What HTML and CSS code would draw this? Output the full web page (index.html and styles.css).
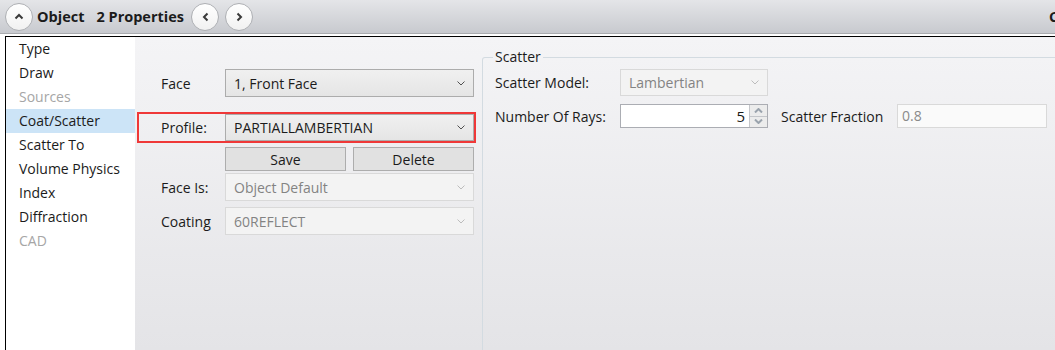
FILE: index.html
```html
<!DOCTYPE html>
<html>

<head>
    <title>Object Properties</title>
    <meta name="viewport" content="width=device-width, initial-scale=1.0">
    <link rel="stylesheet" href="styles.css">
</head>

<body>
    <div class="titlebar">
        <button class="round">
            <svg width="10" height="7" viewBox="0 0 10 7"><polyline points="1.5,5.5 5,2 8.5,5.5" /></svg>
        </button>
        <span class="title">Object</span>
        <span class="title count">2 Properties</span>
        <button class="round nav-left">
            <svg width="7" height="10" viewBox="0 0 7 10"><polyline points="5.5,1.5 2,5 5.5,8.5" /></svg>
        </button>
        <button class="round nav-right">
            <svg width="7" height="10" viewBox="0 0 7 10"><polyline points="1.5,1.5 5,5 1.5,8.5" /></svg>
        </button>
        <span class="title cut">C</span>
    </div>

    <div class="body">
        <div class="frame">
            <ul class="nav">
                <li>Type</li>
                <li>Draw</li>
                <li class="off">Sources</li>
                <li class="active">Coat/Scatter</li>
                <li>Scatter To</li>
                <li>Volume Physics</li>
                <li>Index</li>
                <li>Diffraction</li>
                <li class="off">CAD</li>
            </ul>

            <div class="panel">
                <div class="face-form">
                    <div class="row">
                        <label>Face</label>
                        <div class="combo">
                            <span>1, Front Face</span>
                            <svg width="8" height="5" viewBox="0 0 8 5"><polyline points="0.5,0.5 4,4 7.5,0.5" /></svg>
                        </div>
                    </div>

                    <div class="row profile">
                        <label>Profile:</label>
                        <div class="combo">
                            <span>PARTIALLAMBERTIAN</span>
                            <svg width="8" height="5" viewBox="0 0 8 5"><polyline points="0.5,0.5 4,4 7.5,0.5" /></svg>
                        </div>
                    </div>

                    <div class="buttons">
                        <button class="btn">Save</button>
                        <button class="btn">Delete</button>
                    </div>

                    <div class="row face-is">
                        <label>Face Is:</label>
                        <div class="combo disabled">
                            <span>Object Default</span>
                            <svg width="8" height="5" viewBox="0 0 8 5"><polyline points="0.5,0.5 4,4 7.5,0.5" /></svg>
                        </div>
                    </div>

                    <div class="row coating">
                        <label>Coating</label>
                        <div class="combo disabled">
                            <span>60REFLECT</span>
                            <svg width="8" height="5" viewBox="0 0 8 5"><polyline points="0.5,0.5 4,4 7.5,0.5" /></svg>
                        </div>
                    </div>
                </div>

                <fieldset class="scatter">
                    <legend>Scatter</legend>
                    <div class="srow">
                        <label>Scatter Model:</label>
                        <div class="combo small disabled">
                            <span>Lambertian</span>
                            <svg width="8" height="5" viewBox="0 0 8 5"><polyline points="0.5,0.5 4,4 7.5,0.5" /></svg>
                        </div>
                    </div>
                    <div class="srow rays">
                        <label>Number Of Rays:</label>
                        <div class="spin">
                            <span class="value">5</span>
                            <div class="arrows">
                                <span><svg width="9" height="5" viewBox="0 0 9 5"><polyline points="1,4.5 4.5,1 8,4.5" /></svg></span>
                                <span><svg width="9" height="5" viewBox="0 0 9 5"><polyline points="1,0.5 4.5,4 8,0.5" /></svg></span>
                            </div>
                        </div>
                        <label class="fraction-label">Scatter Fraction</label>
                        <div class="field disabled">0.8</div>
                    </div>
                </fieldset>
            </div>
        </div>
    </div>
</body>

</html>
```

FILE: styles.css
```css
* {
    box-sizing: border-box;
}

body {
    margin: 0;
    width: 1055px;
    height: 350px;
    overflow: hidden;
    font-family: 'Open Sans', sans-serif;
    font-size: 14px;
    color: #1b1b1b;
    background-color: #fff;
}

/* header bar */
.titlebar {
    display: flex;
    align-items: center;
    height: 34px;
    padding-left: 5px;
    background: linear-gradient(#e4e5e8, #c8cacf);
    border-bottom: 1px solid #a9abaf;
    overflow: hidden;
}

.round {
    width: 28px;
    height: 28px;
    padding: 0;
    border-radius: 50%;
    border: 1px solid #aeb0b4;
    background: linear-gradient(#ffffff, #f1f1f1);
    display: flex;
    align-items: center;
    justify-content: center;
    flex-shrink: 0;
}

.round svg polyline {
    fill: none;
    stroke: #3a3a3a;
    stroke-width: 2;
}

.title {
    font-weight: bold;
    font-size: 14.5px;
    margin-left: 4px;
    color: #1b1b1b;
}

.count {
    margin-left: 12px;
}

.nav-left {
    margin-left: 7px;
}

.nav-right {
    margin-left: 6px;
}

.cut {
    margin-left: auto;
    width: 6px;
    flex-shrink: 0;
}

/* main area */
.body {
    padding: 2px 0 0 5px;
    height: 316px;
}

.frame {
    display: flex;
    height: 100%;
    border-top: 1px solid #000;
    border-left: 1px solid #000;
}

.nav {
    list-style: none;
    margin: 0;
    padding: 0;
    width: 129px;
    background-color: #fff;
    flex-shrink: 0;
}

.nav li {
    height: 24px;
    line-height: 23px;
    padding-left: 13px;
}

.nav li.off {
    color: #a6a6a6;
}

.nav li.active {
    background-color: #cce4f7;
}

.panel {
    flex: 1;
    display: flex;
    background: linear-gradient(#f4f4f6, #e4e4e7);
}

/* face form */
.face-form {
    width: 347px;
    padding-top: 32px;
    flex-shrink: 0;
}

.row {
    display: flex;
    align-items: center;
    height: 28px;
    padding-left: 26px;
}

.row label {
    width: 64px;
}

.combo {
    width: 249px;
    height: 28px;
    display: flex;
    align-items: center;
    justify-content: space-between;
    padding: 0 8px 0 8px;
    border: 1px solid #acacac;
    background: linear-gradient(#f0f0f0, #e5e5e5);
}

.combo svg polyline {
    fill: none;
    stroke: #505050;
    stroke-width: 1;
}

.combo.disabled {
    border-color: #d9d9d9;
    background: #f3f3f3;
    color: #838383;
}

.combo.disabled svg polyline {
    stroke: #bcbcbc;
}

.row.profile {
    margin: 15px 0 0 2px;
    width: 339px;
    height: 31px;
    padding-left: 22px;
    border: 2px solid #ef3838;
}

.row.profile .combo {
    height: 27px;
}

.buttons {
    display: flex;
    gap: 7px;
    margin-top: 4px;
    padding-left: 90px;
}

.btn {
    width: 121px;
    height: 24px;
    padding: 0;
    font-family: 'Open Sans', sans-serif;
    font-size: 14px;
    color: #1b1b1b;
    border: 1px solid #adadad;
    background-color: #e1e1e1;
}

.row.face-is {
    margin-top: 2px;
}

.row.coating {
    margin-top: 6px;
}

/* scatter group */
.scatter {
    flex: 1;
    margin: 12px 2px 0 0;
    padding: 4px 12px 0;
    border: 1px solid #d3dbe1;
    border-bottom: none;
    border-radius: 3px 3px 0 0;
}

.scatter legend {
    padding: 0 2px;
    margin-left: -2px;
    line-height: 16px;
}

.srow {
    display: flex;
    align-items: center;
    height: 27px;
}

.srow label {
    width: 125px;
    flex-shrink: 0;
}

.combo.small {
    width: 148px;
    height: 27px;
}

.srow.rays {
    margin-top: 8px;
    height: 24px;
}

.spin {
    display: flex;
    width: 148px;
    height: 24px;
    border: 1px solid #abadb3;
    background-color: #fff;
}

.spin .value {
    flex: 1;
    text-align: right;
    padding-right: 4px;
    line-height: 22px;
    font-size: 15px;
}

.arrows {
    width: 18px;
    display: flex;
    flex-direction: column;
    border-left: 1px solid #c4c6ca;
}

.arrows span {
    flex: 1;
    display: flex;
    align-items: center;
    justify-content: center;
    background-color: #ececec;
}

.arrows span + span {
    border-top: 1px solid #c4c6ca;
}

.arrows svg polyline {
    fill: none;
    stroke: #9aa3ad;
    stroke-width: 2;
}

.srow .fraction-label {
    width: 116px;
    margin-left: 13px;
}

.field {
    width: 150px;
    height: 24px;
    line-height: 22px;
    padding-left: 4px;
    border: 1px solid #d9d9d9;
    background-color: #fafafa;
}

.field.disabled {
    color: #8a8a8a;
}
```
